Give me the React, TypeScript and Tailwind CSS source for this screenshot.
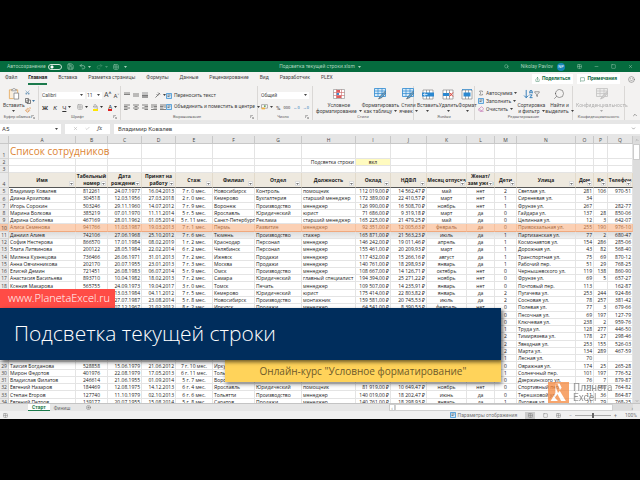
import type { ReactNode } from 'react';
import clsx from 'clsx';
import {
  ArrowDownAZ,
  Check,
  ChevronDown,
  ChevronUp,
  CirclePlus,
  Eraser,
  Funnel,
  Grid2x2,
  MessageSquare,
  Minus,
  PaintBucket,
  Paintbrush,
  Redo2,
  Save,
  Scissors,
  Search,
  Share,
  Sigma,
  Smile,
  Square,
  Undo2,
  X,
} from 'lucide-react';

const tabs = [
  'Файл',
  'Главная',
  'Вставка',
  'Разметка страницы',
  'Формулы',
  'Данные',
  'Рецензирование',
  'Вид',
  'Разработчик',
  'PLEX',
];

type Column = {
  letter: string;
  title: string;
  width: string;
  align: string;
};

const columns: Column[] = [
  { letter: 'A', title: 'Имя', width: 'w-[67px]', align: 'text-left' },
  { letter: 'B', title: 'Табельный номер', width: 'w-[32px]', align: 'text-center' },
  { letter: 'C', title: 'Дата рождения', width: 'w-[34px]', align: 'text-right' },
  { letter: 'D', title: 'Принят на работу', width: 'w-[34px]', align: 'text-right' },
  { letter: 'E', title: 'Стаж', width: 'w-[37px]', align: 'text-center' },
  { letter: 'F', title: 'Филиал', width: 'w-[42px]', align: 'text-left' },
  { letter: 'G', title: 'Отдел', width: 'w-[47px]', align: 'text-left' },
  { letter: 'H', title: 'Должность', width: 'w-[54px]', align: 'text-left' },
  { letter: 'I', title: 'Оклад', width: 'w-[35px]', align: 'text-right' },
  { letter: 'J', title: 'НДФЛ', width: 'w-[36px]', align: 'text-right' },
  { letter: 'K', title: 'Месяц отпуска', width: 'w-[40px]', align: 'text-center' },
  { letter: 'L', title: 'Женат/зам ужем', width: 'w-[28px]', align: 'text-center' },
  { letter: 'M', title: 'Дети', width: 'w-[22px]', align: 'text-center' },
  { letter: 'N', title: 'Улица', width: 'w-[59px]', align: 'text-left' },
  { letter: 'O', title: 'Дом', width: 'w-[18px]', align: 'text-right' },
  { letter: 'P', title: 'Кв', width: 'w-[14px]', align: 'text-right' },
  { letter: 'Q', title: 'Телефон', width: 'w-[25px]', align: 'text-right' },
];

// First sheet row is 5, one string per row, cells split by "|"
const staff = [
  'Владимир Ковалев|812261|24.07.1977|16.04.2013|7 г. 0 мес.|Новосибирск|Контроль|помощник|112 019,00 ₽|14 562,47 ₽|май|нет|2|Светлая ул.|281|106|970-51',
  'Диана Архипова|304518|12.03.1956|27.03.2018|2 г. 0 мес.|Кемерово|Бухгалтерия|старший менеджер|172 389,00 ₽|22 410,57 ₽|март|нет|1|Сиреневая ул.|34||',
  'Игорь Сорокин|503246|29.11.1960|14.07.2012|7 г. 9 мес.|Воронеж|Производство|менеджер|126 990,00 ₽|16 508,70 ₽|ноябрь|нет|1|Фрунзе ул.|267||282-77',
  'Марина Волкова|385219|07.01.1970|11.11.2014|5 г. 5 мес.|Ярославль|Юридический|юрист|71 686,00 ₽|9 319,18 ₽|март|да|0|Гайдара ул.|137|28|850-06',
  'Дарина Соболева|467169|28.01.1962|01.05.2014|5 г. 11 мес.|Санкт-Петербург|Реклама|старший менеджер|165 225,00 ₽|21 479,25 ₽|май|да|0|Целинная ул.|12|3|642-07',
  'Алиса Семенова|941766|11.03.1987|19.03.2013|7 г. 1 мес.|Пермь|Развитие|менеджер|92 351,00 ₽|12 005,63 ₽|февраль|да|0|Привокзальная ул.|255|190|976-10',
  'Даниил Алиев|742106|27.06.1968|25.10.2012|7 г. 6 мес.|Тюмень|Производство|стажер|165 871,00 ₽|21 563,23 ₽|июль|да|1|Партизанская ул.|77|2|680-47',
  'София Нестерова|866570|17.01.1984|08.02.2019|1 г. 2 мес.|Краснодар|Персонал|менеджер|146 242,00 ₽|19 011,46 ₽|апрель|да|1|Космонавтов ул.|154|286|285-06',
  'Злата Литвинова|200122|28.05.1984|22.02.2014|6 г. 2 мес.|Челябинск|Персонал|менеджер|155 461,00 ₽|20 209,93 ₽|март|да|1|Дорожная ул.|43|82|568-40',
  'Милена Кузнецова|736466|26.06.1971|31.01.2013|7 г. 2 мес.|Ижевск|Продажи|менеджер|117 432,00 ₽|15 266,16 ₽|август|да|1|Транспортная ул.|75|69|870-12',
  'Анна Овчинникова|202170|20.07.1955|23.01.2013|7 г. 3 мес.|Москва|Продажи|менеджер|140 761,00 ₽|18 298,93 ₽|январь|да|1|Рабочий пер.|51|29|768-25',
  'Елисей Демин|721451|26.08.1983|06.07.2014|5 г. 9 мес.|Омск|Производство|менеджер|108 667,00 ₽|14 126,71 ₽|октябрь|нет|0|Чернышевского ул.|119|138|860-90',
  'Анастасия Васильева|893710|10.04.1982|18.02.2013|7 г. 2 мес.|Самара|Юридический|главный специалист|194 394,00 ₽|25 271,22 ₽|ноябрь|нет|0|Фрунзе ул.|69|5|657-27',
  'Ксения Макарова|565755|24.09.1973|19.04.2017|3 г. 0 мес.|Томск|Печать|менеджер|109 507,00 ₽|14 235,91 ₽|январь|нет|0|Почтовый пер.|113||162-87',
  '||13.03.1984|04.11.2012|7 г. 5 мес.|Кемерово|Юридический|юрист|175 414,00 ₽|22 803,82 ₽|январь|да|2|Пугачева ул.|253|244|924-86',
  '||27.07.1987|23.08.2014|5 г. 8 мес.|Новосибирск|Производство|монтажник|159 581,00 ₽|20 745,53 ₽|июль|да|2|Сосновая ул.|78|257|381-42',
  '||07.12.1967|21.02.2012|8 г. 2 мес.|Иркутск|Продажи|менеджер|64 541,00 ₽|8 390,53 ₽|февраль|нет|0|Полевая ул.|77|3|679-66',
  '||||||||||||0|Песочная ул.|69|197|127-79',
  '||||||||||||0|Ключевая ул.|238|2|959-76',
  '||||||||||||1|Труда ул.|128|277|446-50',
  '||||||||||||2|Тимирязева ул.|178|27|298-46',
  '||||||||||||2|Звездная ул.|253|155|526-03',
  '||||||||||||2|Марта ул.|134|289|467-59',
  '||||||||||||1|Лесная ул.|70||',
  'Таисия Богданова|528858|15.06.1979|21.06.2012|7 г. 10 мес.|Иркутск|||||||0|Овражная ул.|174|25|265-28',
  'Мирон Федотов|401976|22.08.1979|17.05.2013|6 г. 11 мес.|Тольятти|||||||1|Солнечный пер.|101|197|776-52',
  'Владислав Филатов|246614|21.06.1955|01.09.2014|5 г. 7 мес.|Воронеж|||||||0|Дзержинского ул.|76|7|879-87',
  'Евгений Назаров|184469|12.08.1975|14.12.2013|6 г. 4 мес.|Ярославль|Юридический|помощник|81 919,00 ₽|10 649,47 ₽|ноябрь|нет|0|Спортивный пер.|111|180|764-82',
  'Степан Егоров|127740|11.10.1979|02.10.2013|6 г. 6 мес.|Тольятти|Производство|менеджер|140 019,00 ₽|18 202,47 ₽|июнь|да|0|Терешковой ул.|11|36|864-87',
  'Евгений Петров|139177|20.07.1955|15.08.2014|5 г. 8 мес.|Саратов|Продажи|менеджер|140 761,00 ₽|18 298,93 ₽|январь|да|1|Луговая ул.|21|79|768-25',
].map((row) => row.split('|'));

const CURRENT_ROW = 10;

const Arrow = () => (
  <svg viewBox="0 0 6 4" className="h-[2px] w-[3px] shrink-0" fill="currentColor">
    <path d="M0 0h6L3 4z" />
  </svg>
);

const Launcher = () => (
  <svg viewBox="0 0 8 8" className="h-1 w-1" fill="none" stroke="#777">
    <path d="M1 6V1h5M3 3l4 4M7 4v3H4" />
  </svg>
);

const PasteIcon = () => (
  <svg viewBox="0 0 24 26" className="h-3 w-3" fill="none" strokeWidth="1.6">
    <path d="M8 4H2v19h9M16 4h4v7" stroke="#e2a24c" fill="#fbeeda" />
    <path d="M7 6V3h3c0-3 4-3 4 0h3v3z" stroke="#888" fill="#fff" />
    <path d="M12 11h10v13H12z" stroke="#777" fill="#fff" />
  </svg>
);

// Grid with a coloured band through the middle, as on the cells buttons
const CellsIcon = ({ variant }: { variant: 'insert' | 'delete' | 'format' }) => (
  <svg viewBox="0 0 24 22" className="h-[11px] w-3" fill="none">
    <path d="M2 2h20v18H2z" fill="#fff" stroke="#888" strokeWidth="1.4" />
    <path d="M9 2v18M15 2v18" stroke="#888" strokeWidth="1.4" />
    {variant === 'insert' && <path d="M0 7h24v8H0z" fill="#2b88d0" />}
    {variant === 'insert' && <path d="M7 8l-4 3 4 3M3 11h8" stroke="#fff" strokeWidth="1.4" />}
    {variant === 'delete' && <path d="M2 8h12v6H2z" fill="#2b88d0" />}
    {variant === 'delete' && <path d="M15 7l7 8M22 7l-7 8" stroke="#d9453c" strokeWidth="2" />}
    {variant === 'format' && <path d="M5 7h14v8H5z" fill="#2b88d0" />}
    {variant === 'format' && <path d="M3 1h18M3 0v3M21 0v3" stroke="#2b88d0" strokeWidth="1.4" />}
  </svg>
);

const StyleIcon = () => (
  <svg viewBox="0 0 24 24" className="h-3 w-3" fill="none">
    <path d="M1 1h22v16H1z" fill="#d6eaf8" stroke="#2b88d0" strokeWidth="1.6" />
    <path d="M1 6h22M1 11h22M8 1v15M16 1v15" stroke="#2b88d0" strokeWidth="1.4" />
    <path d="M22 7l-9 9-4 6 7-3 8-10z" fill="#5aa9e0" stroke="#555" strokeWidth="1.2" />
  </svg>
);

const ConditionalIcon = () => (
  <svg viewBox="0 0 24 20" className="h-3 w-3" fill="none">
    <path d="M1 1h22v18H1z" fill="#fff" stroke="#999" strokeWidth="1.4" />
    <path d="M7 2h7v5H7zM7 13h9v5H7z" fill="#e05a5a" />
    <path d="M7 8h5v4H7z" fill="#3b8ad0" />
    <path d="M1 7h22M1 13h22M7 1v18M17 1v18" stroke="#c66" strokeWidth="1.2" />
  </svg>
);

const LinesIcon = ({ d }: { d: string }) => (
  <svg viewBox="0 0 12 12" className="h-[6px] w-[6px]" fill="none" stroke="#666" strokeWidth="1.6">
    <path d={d} />
  </svg>
);

const TextIcon = () => (
  <svg viewBox="0 0 12 12" className="h-[6px] w-[6px] shrink-0" fill="none" strokeWidth="1.4">
    <path d="M1 1h10v10H1z" stroke="#2b88d0" fill="#cfe6f7" />
    <path d="M3 4h6M3 7h4" stroke="#555" />
  </svg>
);

type GroupProps = {
  title: string;
  width: string;
  launcher?: boolean;
  children: ReactNode;
};

const Group = ({ title, width, launcher, children }: GroupProps) => (
  <section className={clsx('flex shrink-0 flex-col border-r border-[#dad8d6] px-[3px] pt-[2px]', width)}>
    <div className="flex flex-1 items-center justify-between">{children}</div>
    <div className="flex h-[6px] items-center text-[4px] text-[#666]">
      <span className="flex-1 text-center">{title}</span>
      {launcher && <Launcher />}
    </div>
  </section>
);

type BigButtonProps = {
  icon: ReactNode;
  label: string;
  second?: string;
  muted?: boolean;
};

const BigButton = ({ icon, label, second, muted }: BigButtonProps) => (
  <button
    className={clsx(
      'flex flex-col items-center whitespace-nowrap text-[5px] leading-[6px]',
      muted && 'opacity-40',
    )}
  >
    {icon}
    <span className="mt-[2px]">{label}</span>
    <span className="flex h-[6px] items-center gap-[2px]">
      {second}
      <Arrow />
    </span>
  </button>
);

const SmallButton = ({ icon, label, arrow }: { icon: ReactNode; label: string; arrow?: boolean }) => (
  <button className="flex items-center gap-[2px] whitespace-nowrap text-[5px] leading-[7px]">
    {icon}
    {label}
    {arrow && <Arrow />}
  </button>
);

const TitleBar = () => (
  <header className="flex h-[11px] shrink-0 items-center bg-[#056b3e] px-[7px] text-[5px] text-[#a9d3bd]">
    <div className="flex flex-1 items-center gap-[5px]">
      <label className="flex items-center gap-[2px]">
        Автосохранение
        <input
          type="checkbox"
          className="h-[6px] w-[14px] appearance-none rounded-full border border-[#cfe6da] bg-[radial-gradient(circle_at_3px_50%,#fff_1px,transparent_2px)]"
        />
      </label>
      <button aria-label="Сохранить"><Save size={7} /></button>
      <button aria-label="Отменить" className="flex items-center gap-[2px]"><Undo2 size={7} /><Arrow /></button>
      <button aria-label="Вернуть" className="flex items-center gap-[2px] opacity-40"><Redo2 size={7} /><Arrow /></button>
      <button aria-label="Таблица"><Grid2x2 size={6} /></button>
      <Arrow />
    </div>
    <div className="flex items-center gap-[3px]">
      Подсветка текущей строки.xlsm <Arrow />
    </div>
    <div className="flex flex-1 items-center justify-end gap-3">
      <button aria-label="Поиск"><Search size={5} /></button>
      <span className="flex items-center gap-1">
        Nikolay Pavlov
        <span className="flex h-2 w-2 items-center justify-center rounded-full bg-[#1686b8] text-[4px] text-white">NP</span>
      </span>
      <button aria-label="Лента"><Grid2x2 size={5} /></button>
      <button aria-label="Свернуть"><Minus size={5} /></button>
      <button aria-label="Развернуть"><Square size={5} /></button>
      <button aria-label="Закрыть"><X size={5} /></button>
    </div>
  </header>
);

const TabBar = () => (
  <nav className="flex h-[14px] shrink-0 items-center gap-[11px] bg-[#f3f2f1] px-[5px] text-[5px] text-[#444]">
    {tabs.map((tab) => (
      <button
        key={tab}
        className={clsx(
          'h-[11px] whitespace-nowrap border-b-2',
          tab === 'Главная' ? 'border-[#1c7a4c] font-bold text-[#222]' : 'border-transparent',
        )}
      >
        {tab}
      </button>
    ))}
    <div className="flex flex-1 items-center justify-end gap-[4px] font-bold text-[#11693f]">
      <button className="flex items-center gap-[2px] bg-white px-[3px] py-px"><Share size={5} />Поделиться</button>
      <button className="flex items-center gap-[2px] bg-white px-[3px] py-px"><MessageSquare size={5} />Примечания</button>
      <button aria-label="Отзыв" className="ml-1 text-[#777]"><Smile size={7} /></button>
    </div>
  </nav>
);

const Ribbon = () => (
  <div className="flex h-[34px] shrink-0 bg-[#f3f2f1] text-[#444]">
    <Group title="Буфер обмена" width="w-[39px]" launcher>
      <BigButton icon={<PasteIcon />} label="Вставить" />
      <div className="flex flex-col gap-[3px] text-[#457ba8]">
        <button aria-label="Вырезать"><Scissors size={5} className="-rotate-90" /></button>
        <button aria-label="Копировать" className="flex items-center gap-px">
          <LinesIcon d="M1 1h6v8H1zM4 4h7v7H4z" />
          <Arrow />
        </button>
        <button aria-label="Формат по образцу" className="text-[#df8a3c]"><Paintbrush size={6} /></button>
      </div>
    </Group>
    <Group title="Шрифт" width="w-[82px]" launcher>
      <div className="flex flex-1 flex-col gap-[5px]">
        <div className="flex items-center gap-[2px]">
          <span className="flex w-[43px] items-center bg-white pr-[2px]">
            <select aria-label="Шрифт" className="h-[7px] min-w-0 flex-1 appearance-none text-[5px] leading-[7px]">
              <option>Calibri</option>
            </select>
            <Arrow />
          </span>
          <span className="flex w-[15px] items-center bg-white pr-[2px]">
            <select aria-label="Размер шрифта" className="h-[7px] min-w-0 flex-1 appearance-none text-[5px] leading-[7px]">
              <option>11</option>
            </select>
            <Arrow />
          </span>
          <button className="text-[7px] leading-[7px]">A^</button>
          <button className="text-[6px] leading-[7px]">A˅</button>
        </div>
        <div className="flex h-[7px] items-center justify-between pr-[2px] text-[6px] leading-[7px] text-[#333]">
          <button className="font-bold">Ж</button>
          <button className="italic">К</button>
          <button className="flex items-center gap-[2px] underline">Ч <Arrow /></button>
          <button aria-label="Границы" className="flex items-center gap-[2px]"><Grid2x2 size={6} color="#888" /><Arrow /></button>
          <button aria-label="Цвет заливки" className="flex items-center gap-[2px]">
            <span className="border-b-2 border-[#ffe600]"><PaintBucket size={5} color="#777" /></span>
            <Arrow />
          </button>
          <button className="flex items-center gap-[2px]">
            <span className="border-b-2 border-[#e02020] leading-[5px]">А</span>
            <Arrow />
          </button>
        </div>
      </div>
    </Group>
    <Group title="Выравнивание" width="w-[137px]" launcher>
      <div className="flex flex-col gap-[6px]">
        <div className="flex items-center gap-[3px]">
          <LinesIcon d="M0 2h12M0 5h12" />
          <LinesIcon d="M0 4h12M0 8h12" />
          <span className="bg-[#c4c4c4]"><LinesIcon d="M0 7h12M0 10h12" /></span>
          <span className="ml-1 flex items-center gap-[2px]">
            <LinesIcon d="M1 11L10 2M3 4l3 3M6 1l4 4" />
            <Arrow />
          </span>
        </div>
        <div className="flex items-center gap-[3px]">
          <LinesIcon d="M0 2h12M0 5h7M0 8h12M0 11h7" />
          <LinesIcon d="M0 2h12M3 5h6M0 8h12M3 11h6" />
          <LinesIcon d="M0 2h12M5 5h7M0 8h12M5 11h7" />
          <LinesIcon d="M0 2h12M5 5h7M5 8h7M0 11h12M0 6h4" />
          <LinesIcon d="M0 2h12M0 5h7M0 8h7M0 11h12M8 6h4" />
        </div>
      </div>
      <div className="flex flex-col items-start gap-1">
        <SmallButton icon={<TextIcon />} label="Переносить текст" />
        <SmallButton icon={<TextIcon />} label="Объединить и поместить в центре" arrow />
      </div>
    </Group>
    <Group title="Число" width="w-[55px]" launcher>
      <div className="flex flex-1 flex-col gap-[5px]">
        <span className="flex items-center bg-white pr-[2px]">
          <select aria-label="Числовой формат" className="h-[7px] min-w-0 flex-1 appearance-none text-[5px] leading-[7px]">
            <option>Общий</option>
          </select>
          <Arrow />
        </span>
        <div className="flex h-[7px] items-center justify-between text-[6px] leading-[7px]">
          <button aria-label="Денежный формат" className="flex items-center gap-[2px]">
            <svg viewBox="0 0 12 10" className="h-[6px] w-[7px]">
              <path d="M1 1h10v6H1z" fill="#fff" stroke="#777" />
              <path d="M1 6h6v3H1z" fill="#f0b040" />
              <path d="M5 2h3v3H5z" fill="#6ba368" />
            </svg>
            <Arrow />
          </button>
          <button>%</button>
          <button className="text-[4px]">000</button>
          <button className="text-[4px] text-[#2b78b8]">←0</button>
          <button className="text-[4px] text-[#2b78b8]">→0</button>
        </div>
      </div>
    </Group>
    <Group title="Стили" width="w-[101px]">
      <BigButton icon={<ConditionalIcon />} label="Условное" second="форматирование" />
      <BigButton icon={<StyleIcon />} label="Форматировать" second="как таблицу" />
      <BigButton icon={<StyleIcon />} label="Стили" second="ячеек" />
    </Group>
    <Group title="Ячейки" width="w-[61px]">
      <BigButton icon={<CellsIcon variant="insert" />} label="Вставить" />
      <BigButton icon={<CellsIcon variant="delete" />} label="Удалить" />
      <BigButton icon={<CellsIcon variant="format" />} label="Формат" />
    </Group>
    <Group title="Редактирование" width="w-[98px]">
      <div className="flex flex-col items-start gap-px">
        <SmallButton icon={<Sigma size={6} />} label="Автосумма" arrow />
        <SmallButton icon={<TextIcon />} label="Заполнить" arrow />
        <SmallButton icon={<Eraser size={6} color="#b44fa0" />} label="Очистить" arrow />
      </div>
      <BigButton
        icon={
          <span className="flex items-center">
            <ArrowDownAZ size={11} color="#2b78b8" className="h-3" />
            <Funnel size={6} />
          </span>
        }
        label="Сортировка"
        second="и фильтр"
      />
      <BigButton
        icon={<Search size={12} strokeWidth={1} className="-scale-x-100" />}
        label="Найти и"
        second="выделить"
      />
    </Group>
    <Group title="Конфиденциальность" width="w-[52px]">
      <div className="flex flex-1 justify-center grayscale">
        <BigButton icon={<StyleIcon />} label="Конфиденциальность" muted />
      </div>
    </Group>
    <div className="flex flex-1 items-end justify-end p-[2px]">
      <button aria-label="Свернуть ленту"><ChevronUp size={6} /></button>
    </div>
  </div>
);

const FormulaBar = () => (
  <div className="flex h-4 shrink-0 items-center gap-1 bg-[#e6e6e6] pt-px text-[6px] text-[#444]">
    <div className="flex h-[10px] w-[61px] items-center bg-white pl-[2px] pr-[3px]">
      <input aria-label="Имя" defaultValue="A5" className="min-w-0 flex-1" />
      <Arrow />
    </div>
    <div className="flex h-[10px] w-[45px] items-center justify-between bg-white px-2 text-[#999]">
      <X size={5} />
      <Check size={5} />
      <button className="font-serif italic text-[#444]">fx</button>
    </div>
    <div className="flex h-[10px] flex-1 items-center bg-white px-1">
      <input aria-label="Строка формул" defaultValue="Владимир Ковалев" className="min-w-0 flex-1" />
      <ChevronDown size={5} />
    </div>
  </div>
);

const RowNumber = ({ n, current }: { n: number; current?: boolean }) => (
  <th
    scope="row"
    className={clsx(
      'border-b border-r border-[#d4d4d4] p-0 text-center align-bottom font-normal text-[#444]',
      current ? 'bg-[#f5c3a3]' : 'bg-[#e9e9e9]',
    )}
  >
    {n}
  </th>
);

const EmptyCells = ({ count }: { count: number }) => (
  <>
    {Array.from({ length: count }, (_, i) => (
      <td key={i} className="border-b border-r border-[#e4e4e4] p-0" />
    ))}
  </>
);

const Sheet = () => (
  <table className="-mb-[3px] w-full table-fixed border-separate border-spacing-0 bg-white font-['Open_Sans','Noto_Sans',sans-serif] text-[5px] leading-[6px] text-[#222]">
    <colgroup>
      <col className="w-[9px]" />
      {columns.map((col) => (
        <col key={col.letter} className={col.width} />
      ))}
    </colgroup>
    <thead>
      <tr className="h-2 bg-[#e6e6e6] text-[#444]">
        <td className="border-b border-r border-[#c8c8c8] p-0" />
        {columns.map((col) => (
          <th key={col.letter} className="border-b border-r border-[#c8c8c8] p-0 font-normal">
            {col.letter}
          </th>
        ))}
      </tr>
      <tr className="h-[15px]">
        <RowNumber n={1} />
        <td colSpan={2} className="whitespace-nowrap border-b border-r border-[#e4e4e4] p-0 pl-px text-[10px] leading-[14px] text-[#dd8432]">
          Список сотрудников
        </td>
        <EmptyCells count={15} />
      </tr>
      <tr className="h-[7px]">
        <RowNumber n={2} />
        <EmptyCells count={7} />
        <td className="whitespace-nowrap border-b border-r border-[#e4e4e4] p-0 pr-px text-right">
          Подсветка строки
        </td>
        <td className="border-b border-r border-[#e4e4e4] bg-[#fffbc0] p-0 text-center">вкл</td>
        <EmptyCells count={8} />
      </tr>
      <tr className="h-[7px]">
        <RowNumber n={3} />
        <EmptyCells count={17} />
      </tr>
      <tr className="h-[15px]">
        <RowNumber n={4} />
        {columns.map((col) => (
          <th key={col.letter} className="relative border-b border-r border-b-[#555] border-r-[#e2dacb] bg-[#eee9df] p-0">
            <span className="block max-h-[14px] overflow-hidden leading-[7px]">{col.title}</span>
            <button
              aria-label={`Фильтр: ${col.title}`}
              className="absolute bottom-px right-px flex h-[5px] w-[5px] items-center justify-center border border-[#ddd] bg-white text-[#777]"
            >
              <Arrow />
            </button>
          </th>
        ))}
      </tr>
    </thead>
    <tbody>
      {staff.map((row, i) => {
        const n = i + 5;
        const current = n === CURRENT_ROW;
        return (
          <tr
            key={n}
            className={clsx(
              current && 'bg-[#fbd0b4] text-[#a8683c]',
              n === CURRENT_ROW + 1 && 'bg-linear-to-b from-[#dcdcdc] to-[#f2f2f2]',
            )}
          >
            <RowNumber n={n} current={current} />
            {row.map((cell, j) => (
              <td
                key={j}
                className={clsx(
                  'whitespace-nowrap border-b border-r px-px py-0',
                  j === row.length - 1 && 'overflow-hidden',
                  columns[j].align,
                  current ? 'border-b-[#f0a97e] border-r-[#f6c09d]' : 'border-[#e4e4e4]',
                )}
              >
                {cell}
              </td>
            ))}
          </tr>
        );
      })}
    </tbody>
  </table>
);

const SheetTabs = () => (
  <div className="flex h-2 shrink-0 items-center border-t border-[#c4c4c4] bg-[#e6e6e6] pl-[28px] pr-[7px] text-[5px] leading-[6px] text-[#666]">
    <button className="h-full border-b border-[#1c7a4c] bg-white px-1 font-bold text-[#1c7a4c]">Старт</button>
    <button className="px-1">Финиш</button>
    <button aria-label="Новый лист" className="ml-3"><CirclePlus size={5} /></button>
    <div className="ml-auto flex h-full w-[244px] items-center bg-[#dcdcdc]">
      <button aria-label="Влево" className="flex h-full w-[6px] items-center justify-center border border-[#ccc] bg-white">‹</button>
      <div className="h-full w-[218px] border border-[#d0d0d0] bg-white" />
      <button aria-label="Вправо" className="ml-auto">›</button>
    </div>
  </div>
);

const StatusBar = () => (
  <footer className="flex h-2 shrink-0 items-center gap-2 bg-[#f0f0f0] px-[3px] text-[5px] leading-[6px] text-[#777]">
    <Grid2x2 size={5} />
    <button className="ml-auto flex items-center gap-[2px]"><TextIcon />Параметры отображения</button>
    <button aria-label="Обычный" className="flex h-[7px] w-[10px] items-center justify-center bg-[#ccc]"><Grid2x2 size={5} /></button>
    <button aria-label="Разметка"><Square size={5} /></button>
    <button aria-label="Страничный"><Grid2x2 size={5} /></button>
    <div className="flex items-center gap-[3px]">
      −
      <input
        type="range"
        aria-label="Масштаб"
        className="h-px w-[36px] appearance-none bg-[#aaa] [&::-webkit-slider-thumb]:h-[5px] [&::-webkit-slider-thumb]:w-[2px] [&::-webkit-slider-thumb]:appearance-none [&::-webkit-slider-thumb]:bg-[#666]"
      />
      +
    </div>
    <span>100%</span>
  </footer>
);

const Captions = () => (
  <div className="absolute bottom-[37px] left-0 flex w-[501px] flex-col items-start font-['Open_Sans','Noto_Sans',sans-serif]">
    <a
      href="#planetaexcel"
      className="flex h-[19px] w-[115px] items-center bg-[#ff4c46] pl-2 text-[11px] font-light text-white"
    >
      www.PlanetaExcel.ru
    </a>
    <h1 className="z-10 flex h-[52px] w-full items-center bg-[#002d5c] pl-[14px] text-[21px] font-light text-white shadow-[2px_2px_4px_rgba(0,0,0,0.6)]">
      Подсветка текущей строки
    </h1>
    <p className="flex h-[22px] w-[276px] items-center justify-center self-end bg-[#ffd35a] text-[10px] text-[#6e5a2a] shadow-[1px_2px_4px_rgba(0,0,0,0.5)]">
      Онлайн-курс "Условное форматирование"
    </p>
  </div>
);

const Logo = () => (
  <div className="absolute bottom-4 right-[26px] flex items-center gap-1 opacity-75">
    <svg viewBox="0 0 40 40" className="h-[21px] w-[21px]">
      <path d="M0 0h40v40H0z" fill="#f5873d" />
      <path d="M14 3h8l4 8-4 5 12 20h-9l-7-13-5 7 6 6H5l9-15z" fill="#fff" />
      <path d="M13 3h5l5 13-4 5z" fill="#f5873d" />
    </svg>
    <span className="w-[41px] text-[10px] leading-[10px] text-[#777]">
      Планета Excel
    </span>
  </div>
);

export default function App() {
  return (
    <main className="flex min-h-screen items-center bg-black font-['Roboto','Noto_Sans',sans-serif]">
      <div className="relative flex aspect-video w-full flex-col overflow-hidden border-y border-black">
        <TitleBar />
        <TabBar />
        <Ribbon />
        <FormulaBar />
        <div className="flex min-h-0 flex-1">
          <div className="grid min-w-0 flex-1 overflow-hidden">
            <Sheet />
          </div>
          <div className="flex w-[7px] flex-col items-center bg-[#dcdcdc] text-[#666]">
            <button aria-label="Вверх" className="flex h-2 items-center"><ChevronUp size={4} /></button>
            <div className="h-4 w-full border border-[#ccc] bg-white" />
            <button aria-label="Вниз" className="mt-auto"><ChevronDown size={4} /></button>
          </div>
        </div>
        <SheetTabs />
        <StatusBar />
        <Captions />
        <Logo />
      </div>
    </main>
  );
}
